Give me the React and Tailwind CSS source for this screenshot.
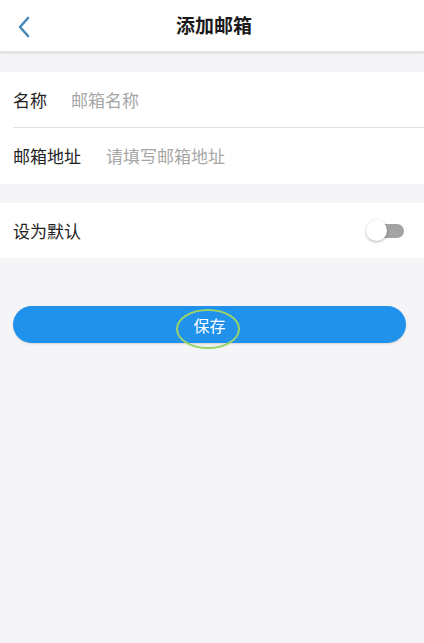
import React, { useState } from 'react';

const font = { fontFamily: '"Noto Sans CJK SC", "Noto Sans", sans-serif' };

const FieldRow = ({ label, placeholder, gap, bordered }) => (
  <div className="flex items-stretch pl-[13px]">
    <div className={`flex flex-1 items-center h-[56px] ${bordered ? 'border-b border-[#e2e2e4]' : ''}`}>
      <span className={`text-[17px] text-[#222] ${gap}`}>{label}</span>
      <input
        className="flex-1 bg-transparent text-[17px] text-[#222] outline-none placeholder:text-[#a6a6a6]"
        placeholder={placeholder}
        style={font}
      />
    </div>
  </div>
);

const App = () => {
  const [isDefault, setIsDefault] = useState(false);

  return (
    <div className="w-[424px] h-[643px] bg-[#f5f5f7] overflow-hidden" style={font}>
      {/* nav bar */}
      <div className="relative flex items-center justify-center h-[52px] bg-white shadow-[0_1px_3px_rgba(0,0,0,0.12)] border-b border-[#e4e4e4]">
        <button className="absolute left-[12px] top-[11px] p-1">
          <svg width="16" height="24" viewBox="0 0 16 24" fill="none">
            <path d="M12 3 L4 12 L12 21" stroke="#4a8ab8" strokeWidth="2.6" strokeLinecap="round" strokeLinejoin="round" />
          </svg>
        </button>
        <h1 className="text-[19px] font-bold text-[#1a1a1a] pl-[4px]">添加邮箱</h1>
      </div>

      {/* form fields */}
      <div className="mt-[20px] bg-white">
        <FieldRow label="名称" placeholder="邮箱名称" gap="mr-[24px]" bordered />
        <FieldRow label="邮箱地址" placeholder="请填写邮箱地址" gap="mr-[25px]" />
      </div>

      {/* default switch */}
      <div className="mt-[19px] bg-white flex items-center justify-between h-[55px] pl-[13px] pr-[20px]">
        <span className="text-[17px] text-[#222]">设为默认</span>
        <button
          onClick={() => setIsDefault(!isDefault)}
          className="relative w-[38px] h-[22px] flex items-center"
        >
          <span className={`absolute right-0 w-[28px] h-[14px] rounded-full ${isDefault ? 'bg-[#9ccaf5]' : 'bg-[#a3a3a3]'}`} />
          <span className={`absolute w-[21px] h-[21px] rounded-full bg-white shadow-[0_1px_3px_rgba(0,0,0,0.3)] ${isDefault ? 'left-[17px]' : 'left-0'}`} />
        </button>
      </div>

      {/* save button */}
      <div className="pl-[13px] pr-[18px] mt-[48px]">
        <button className="relative w-full h-[37px] rounded-full bg-[#2092ec] flex items-center justify-center shadow-[0_1px_2px_rgba(0,0,0,0.15)]">
          <span className="text-[16px] text-white">保存</span>
          <span className="absolute left-[163px] top-[3px] w-[64px] h-[40px] rounded-[50%] border-2 border-[#9ad36a]" />
        </button>
      </div>
    </div>
  );
};

export default App;
